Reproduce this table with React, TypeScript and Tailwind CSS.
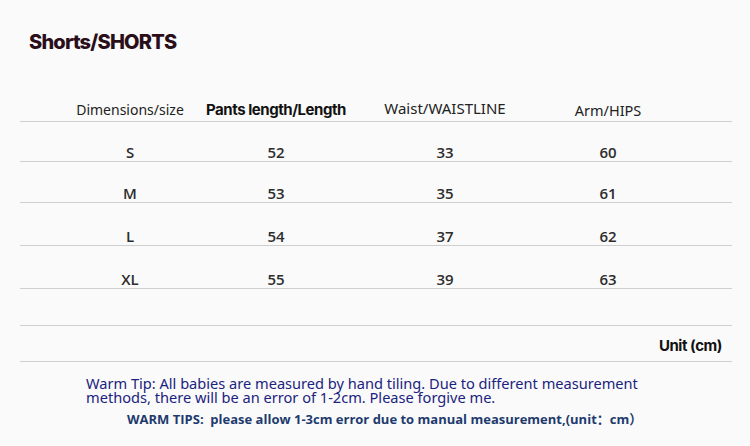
const cols = ["ml-[40px]", "ml-[6px]", "ml-[29px]", "ml-[23px]"];

const rows = [
  { size: "S", len: "52", waist: "33", hips: "60", h: "h-[40px]" },
  { size: "M", len: "53", waist: "35", hips: "61", h: "h-[41px]" },
  { size: "L", len: "54", waist: "37", hips: "62", h: "h-[43px]" },
  { size: "XL", len: "55", waist: "39", hips: "63", h: "h-[43px]" },
];

export default function App() {
  return (
    <div className="w-[750px] h-[446px] bg-[#fafafa] overflow-hidden">
      <h1 className="pl-[29px] pt-[30px] h-[54px] text-[20px] leading-[24px] font-extrabold tracking-[-0.04em] text-[#2a0f1a] font-['Inter',sans-serif]">
        Shorts/SHORTS
      </h1>
      <div className="mx-[20px] w-[712px]">
        {/* header */}
        <div className="h-[68px] flex items-end border-b border-[#cfcfcf] text-[14px] text-[#222] leading-[20px] pb-[1px]">
          <div className={`${cols[0]} w-[140px] flex justify-center whitespace-nowrap font-['Noto_Sans',sans-serif]`}>
            Dimensions/size
          </div>
          <div className={`${cols[1]} w-[140px] flex justify-center whitespace-nowrap text-[15px] font-bold tracking-[-0.03em] text-[#111] font-['Inter',sans-serif]`}>
            Pants length/Length
          </div>
          <div className={`${cols[2]} w-[140px] flex justify-center whitespace-nowrap mb-[2px] text-[15px] font-['Noto_Sans',sans-serif]`}>
            Waist/WAISTLINE
          </div>
          <div className={`${cols[3]} w-[140px] flex justify-center whitespace-nowrap text-[14.5px] font-['Noto_Sans',sans-serif]`}>
            Arm/HIPS
          </div>
        </div>
        {/* data rows */}
        {rows.map((r) => (
          <div
            key={r.size}
            className={`${r.h} flex items-end border-b border-[#cfcfcf] text-[15px] leading-[16px] pb-[1px] font-semibold text-[#2d2d2d] font-['Open_Sans',sans-serif]`}
          >
            {[r.size, r.len, r.waist, r.hips].map((v, i) => (
              <div key={i} className={`${cols[i]} w-[140px] flex justify-center`}>
                {v}
              </div>
            ))}
          </div>
        ))}
        <div className="h-[37px] border-b border-[#cfcfcf]" />
        <div className="h-[36px] flex items-end pb-[7px] justify-end pr-[10px] border-b border-[#cfcfcf] text-[15px] leading-[16px] font-bold tracking-[-0.03em] text-[#111] font-['Inter',sans-serif]">
          Unit (cm)
        </div>
      </div>
      {/* tips */}
      <div className="pl-[86px] pt-[14px] text-[14.6px] leading-[14px] text-[#1a237e] font-['Noto_Sans',sans-serif]">
        <p>Warm Tip: All babies are measured by hand tiling. Due to different measurement</p>
        <p>methods, there will be an error of 1-2cm. Please forgive me.</p>
      </div>
      <p className="pl-[127px] pt-[7px] text-[13px] leading-[16px] font-bold text-[#1e3a6e] font-['Open_Sans','Noto_Sans_CJK_SC',sans-serif]">
        WARM TIPS:&nbsp; please allow 1-3cm error due to manual measurement,(unit：cm）
      </p>
    </div>
  );
}
